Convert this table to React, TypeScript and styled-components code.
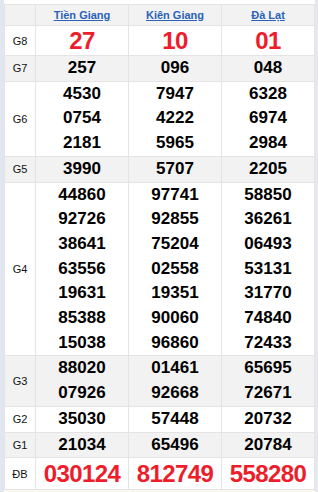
import React from "react";
import styled, { createGlobalStyle } from "styled-components";

const Global = createGlobalStyle`
  html, body { margin: 0; padding: 0; background: #ffffff; }
  body { font-family: "Liberation Sans", Arial, sans-serif; }
`;

const Page = styled.div`
  display: flex;
  width: 318px;
  height: 492px;
  overflow: hidden;
  background: #ffffff;
`;

const LeftBar = styled.div`
  width: 4px;
  flex: none;
  background: #e2e6ee;
`;

const RightBar = styled.div`
  width: 3px;
  flex: none;
  background: #e6e8ed;
`;

const Main = styled.div`
  display: flex;
  flex-direction: column;
  width: 311px;
  padding-top: 4px;
`;

const Grid = styled.div`
  display: grid;
  grid-template-columns: 30px 92px 92px 92px;
  gap: 1px;
  padding: 1px;
  background: #e4e4e4;
`;

const Cell = styled.div<{ $alt?: boolean }>`
  background: ${(p) => (p.$alt ? "#f2f2f2" : "#ffffff")};
  display: flex;
  flex-direction: column;
  align-items: center;
  justify-content: center;
`;

const HeadCell = styled(Cell)`
  height: 20px;
`;

const HeadLink = styled.a`
  font-size: 11px;
  font-weight: bold;
  color: #2a62b8;
  text-decoration: underline;
  line-height: 20px;
`;

const Label = styled(Cell)`
  font-size: 11px;
  color: #111;
`;

const Num = styled.div`
  font-size: 17px;
  font-weight: bold;
  color: #000;
  line-height: 24.7px;
`;

const BigNum = styled.div<{ $h: number }>`
  font-size: 24px;
  font-weight: bold;
  color: #ee1d2b;
  letter-spacing: -0.6px;
  line-height: ${(p) => p.$h}px;
`;

const Footer = styled.div`
  height: 4px;
  background: #fbf9ef;
`;

const provinces = ["Tiền Giang", "Kiên Giang", "Đà Lạt"];

type Row = { label: string; cols: string[][]; big?: number };

const rows: Row[] = [
  { label: "G8", cols: [["27"], ["10"], ["01"]], big: 29 },
  { label: "G7", cols: [["257"], ["096"], ["048"]] },
  {
    label: "G6",
    cols: [
      ["4530", "0754", "2181"],
      ["7947", "4222", "5965"],
      ["6328", "6974", "2984"],
    ],
  },
  { label: "G5", cols: [["3990"], ["5707"], ["2205"]] },
  {
    label: "G4",
    cols: [
      ["44860", "92726", "38641", "63556", "19631", "85388", "15038"],
      ["97741", "92855", "75204", "02558", "19351", "90060", "96860"],
      ["58850", "36261", "06493", "53131", "31770", "74840", "72433"],
    ],
  },
  {
    label: "G3",
    cols: [
      ["88020", "07926"],
      ["01461", "92668"],
      ["65695", "72671"],
    ],
  },
  { label: "G2", cols: [["35030"], ["57448"], ["20732"]] },
  { label: "G1", cols: [["21034"], ["65496"], ["20784"]] },
  { label: "ĐB", cols: [["030124"], ["812749"], ["558280"]], big: 31 },
];

export default function App() {
  return (
    <>
      <Global />
      <Page>
        <LeftBar />
        <Main>
          <Grid>
            <HeadCell $alt />
            {provinces.map((p) => (
              <HeadCell $alt key={p}>
                <HeadLink href="#">{p}</HeadLink>
              </HeadCell>
            ))}
            {rows.map((r, i) => {
              const alt = i % 2 === 1;
              return (
                <React.Fragment key={r.label}>
                  <Label $alt={alt}>{r.label}</Label>
                  {r.cols.map((c, j) => (
                    <Cell $alt={alt} key={j}>
                      {c.map((n) =>
                        r.big ? (
                          <BigNum $h={r.big} key={n}>
                            {n}
                          </BigNum>
                        ) : (
                          <Num key={n}>{n}</Num>
                        )
                      )}
                    </Cell>
                  ))}
                </React.Fragment>
              );
            })}
          </Grid>
          <Footer />
        </Main>
        <RightBar />
      </Page>
    </>
  );
}
